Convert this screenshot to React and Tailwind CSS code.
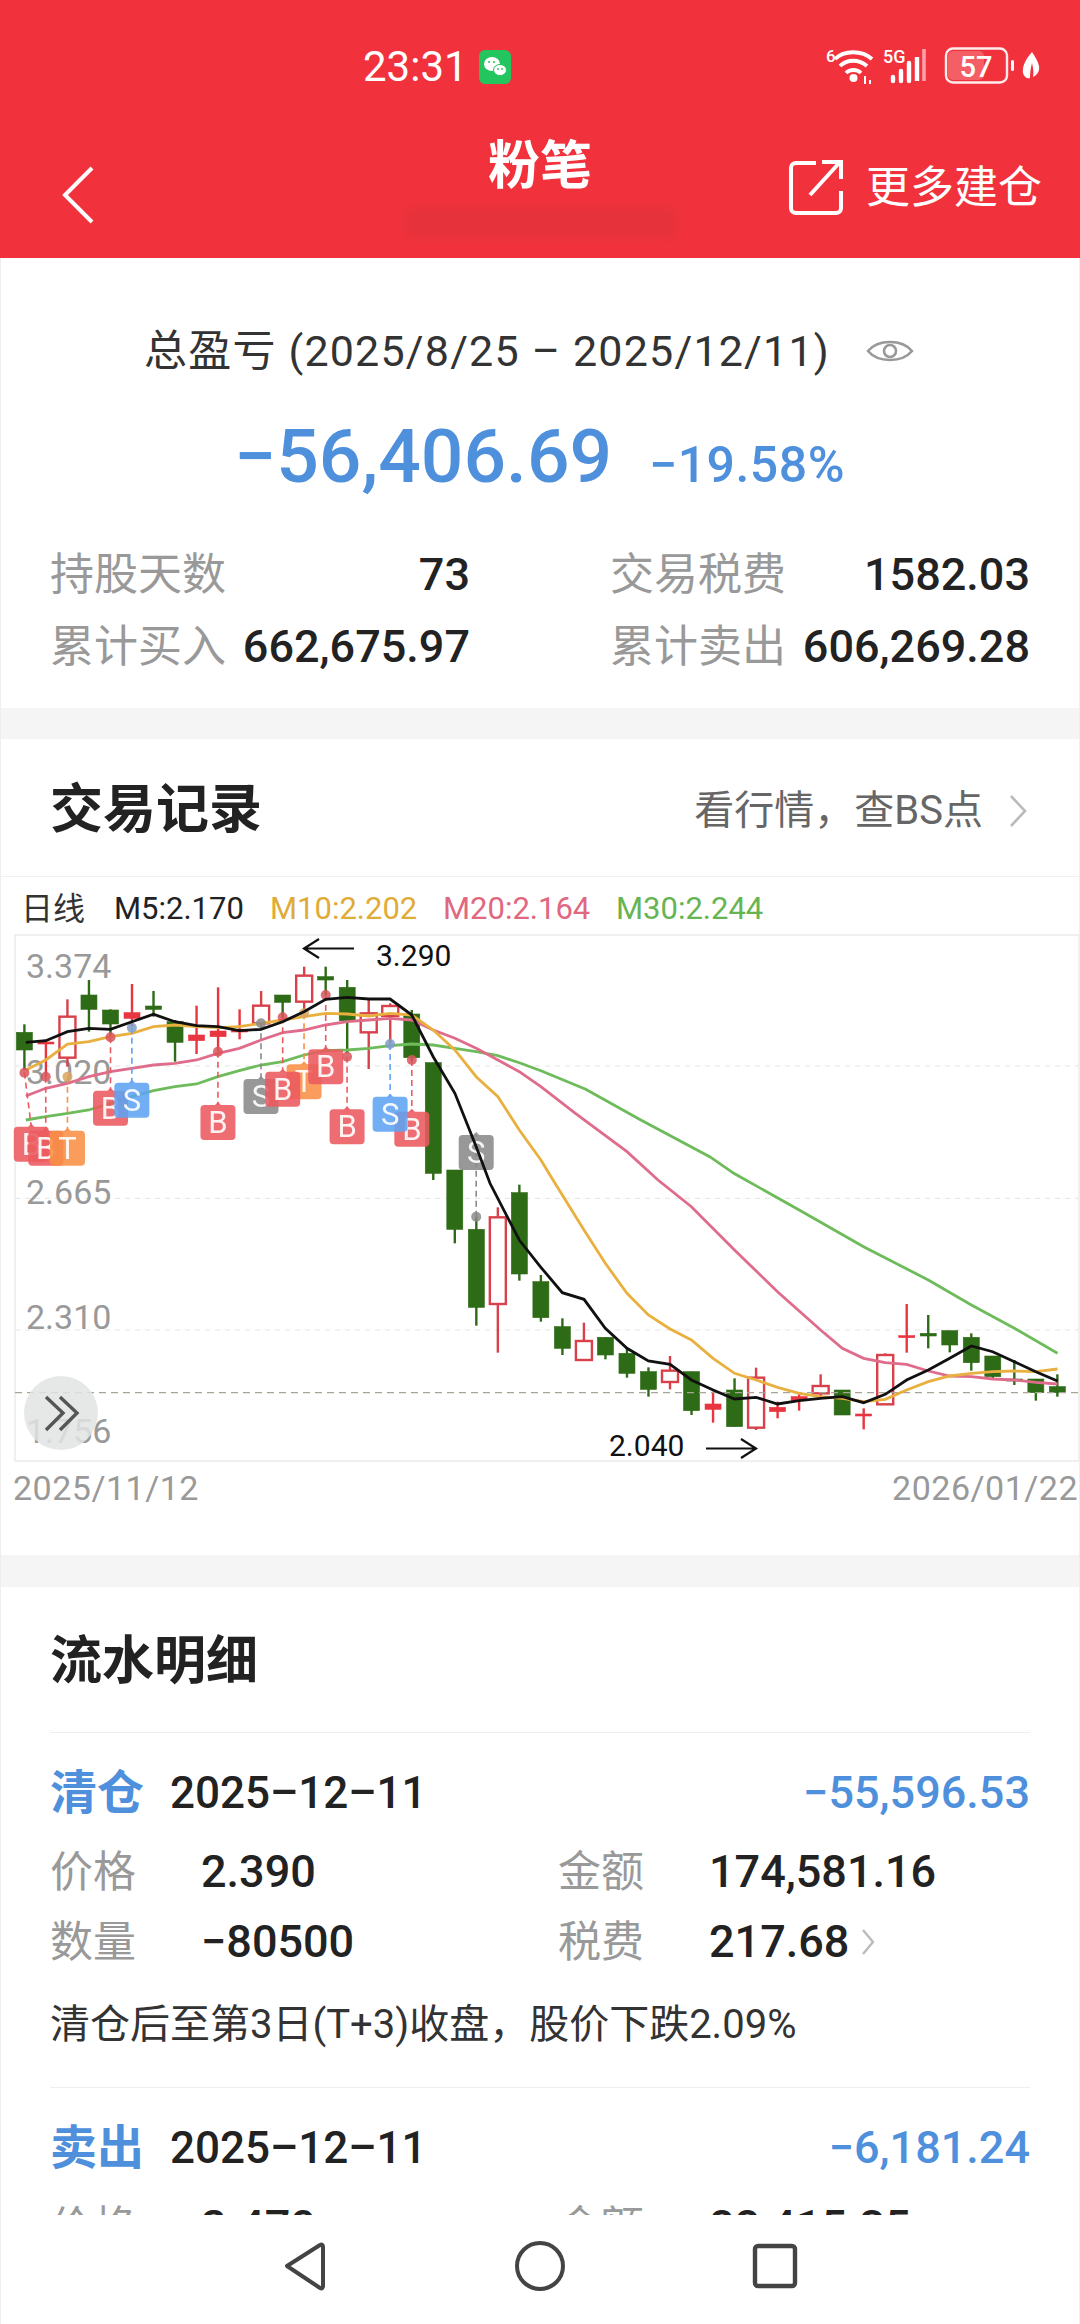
import React from 'react';

// chart points were read off crops of the chart: x/2.904, y/3 from the crop origin
const px = x => x / 2.904;
const py = y => 880 + y / 3;
const poly = pts => pts.map(([x, y]) => `${px(x).toFixed(1)},${py(y).toFixed(1)}`).join(' ');

// [kind, high, top, bottom, low]  g = solid green, h = hollow red, r = solid red
const CANDLES = [
  ['g', 433, 457, 510, 570], ['r', 480, 486, 491, 590], ['h', 358, 410, 533, 560], ['g', 300, 345, 388, 455],
  ['g', 388, 390, 432, 470], ['r', 312, 398, 415, 440], ['g', 333, 378, 388, 410], ['g', 420, 425, 487, 545],
  ['r', 377, 465, 482, 522], ['r', 322, 453, 470, 515], ['r', 388, 448, 456, 478], ['h', 333, 377, 430, 440],
  ['g', 345, 345, 367, 420], ['h', 260, 287, 365, 400], ['g', 260, 290, 300, 345], ['g', 300, 322, 422, 520],
  ['h', 360, 400, 457, 567], ['h', 370, 378, 408, 490], ['g', 390, 402, 533, 545], ['g', 548, 548, 880, 900],
  ['g', 870, 870, 1048, 1090], ['g', 1010, 1048, 1282, 1337], ['h', 982, 1012, 1272, 1418], ['g', 914, 938, 1182, 1202],
  ['g', 1185, 1205, 1313, 1325], ['g', 1315, 1340, 1405, 1425], ['h', 1328, 1383, 1440, 1440], ['g', 1372, 1372, 1425, 1438],
  ['g', 1405, 1420, 1480, 1493], ['g', 1462, 1475, 1528, 1550], ['h', 1428, 1472, 1506, 1528], ['g', 1475, 1475, 1592, 1605],
  ['r', 1535, 1572, 1588, 1628], ['g', 1495, 1530, 1640, 1640], ['h', 1463, 1493, 1643, 1650], ['r', 1565, 1582, 1595, 1615],
  ['r', 1540, 1550, 1562, 1592], ['h', 1483, 1518, 1540, 1550], ['g', 1530, 1530, 1605, 1605], ['r', 1585, 1602, 1608, 1648],
  ['h', 1420, 1425, 1573, 1575], ['r', 1272, 1367, 1373, 1418], ['g', 1305, 1360, 1368, 1405], ['g', 1352, 1352, 1395, 1417],
  ['g', 1360, 1372, 1448, 1472], ['g', 1428, 1428, 1490, 1495], ['g', 1440, 1497, 1502, 1515], ['g', 1497, 1497, 1538, 1562],
  ['g', 1483, 1520, 1538, 1550],
];

const M30 = [[72, 720], [130, 710], [193, 700], [255, 690], [318, 670], [380, 650], [443, 632], [505, 620], [568, 612], [630, 590], [692, 572], [755, 555], [818, 545], [880, 525], [943, 512], [1005, 510], [1068, 505], [1130, 497], [1193, 492], [1255, 495], [1318, 505], [1380, 515], [1443, 527], [1505, 548], [1568, 572], [1698, 628], [1858, 720], [2058, 830], [2128, 880], [2318, 990], [2505, 1100], [2693, 1200], [2818, 1275], [2943, 1345], [3068, 1420]];
const M20 = [[72, 648], [130, 625], [193, 610], [255, 590], [318, 575], [380, 565], [443, 555], [505, 550], [568, 540], [630, 520], [692, 505], [755, 480], [818, 458], [880, 450], [943, 435], [1005, 425], [1068, 420], [1130, 415], [1193, 420], [1255, 450], [1318, 475], [1380, 505], [1443, 540], [1505, 575], [1568, 620], [1668, 700], [1818, 815], [1908, 900], [2005, 980], [2130, 1110], [2255, 1235], [2380, 1350], [2443, 1405], [2505, 1435], [2568, 1448], [2630, 1453], [2693, 1473], [2755, 1488], [2818, 1490], [2880, 1497], [2943, 1500], [3005, 1507], [3068, 1512]];
const M10 = [[72, 570], [130, 540], [193, 492], [255, 485], [318, 470], [380, 460], [443, 440], [505, 435], [568, 440], [630, 443], [692, 440], [755, 430], [818, 420], [880, 410], [943, 400], [1005, 402], [1068, 408], [1130, 400], [1193, 405], [1255, 450], [1318, 510], [1380, 590], [1443, 650], [1505, 750], [1568, 840], [1603, 900], [1693, 1050], [1755, 1150], [1818, 1240], [1880, 1305], [1943, 1347], [2005, 1380], [2068, 1435], [2130, 1480], [2193, 1500], [2255, 1522], [2318, 1540], [2380, 1550], [2443, 1555], [2505, 1565], [2568, 1558], [2630, 1530], [2693, 1505], [2755, 1488], [2818, 1480], [2880, 1475], [2943, 1473], [3005, 1475], [3068, 1467]];
const M5 = [[72, 487], [130, 482], [193, 455], [255, 445], [318, 448], [380, 425], [443, 403], [505, 425], [568, 437], [630, 440], [692, 452], [755, 448], [818, 425], [880, 395], [943, 358], [1005, 352], [1068, 357], [1130, 357], [1193, 405], [1255, 530], [1318, 640], [1380, 800], [1420, 910], [1470, 1010], [1505, 1080], [1568, 1162], [1630, 1238], [1693, 1258], [1755, 1345], [1818, 1405], [1880, 1443], [1943, 1453], [2005, 1500], [2068, 1530], [2130, 1557], [2193, 1552], [2255, 1572], [2318, 1562], [2380, 1555], [2443, 1550], [2505, 1568], [2568, 1543], [2630, 1500], [2693, 1470], [2755, 1435], [2818, 1398], [2880, 1415], [2943, 1445], [3005, 1475], [3068, 1503]];

const MARK_COLORS = {
  B: { fill: '#ec5a5f', dot: '#d9555c' },
  S: { fill: '#5ea3f2', dot: '#7f9ec9' },
  G: { fill: '#8a8a8a', dot: '#8a8a8a' },
  T: { fill: '#fa8f45', dot: '#d9a45f' },
};

// [style, letter, x of the pin, top of the box, dot x, dot y]
const MARKERS = [
  ['B', 'B', 88, 740, 68, 578], ['B', 'B', 130, 752, 130, 590], ['T', 'T', 193, 752, 193, 590],
  ['B', 'B', 318, 632, 318, 472], ['S', 'S', 380, 608, 380, 443], ['B', 'B', 630, 675, 630, 515],
  ['G', 'S', 755, 597, 755, 430], ['T', 'T', 880, 553, 880, 400], ['B', 'B', 818, 575, 818, 412],
  ['B', 'B', 943, 508, 943, 345], ['B', 'B', 1005, 688, 1005, 530], ['B', 'B', 1193, 695, 1193, 540],
  ['S', 'S', 1130, 650, 1130, 492], ['G', 'S', 1380, 765, 1380, 1010],
];

const AXIS = [['3.374', 258], ['3.020', 575], ['2.665', 936], ['2.310', 1310], ['1.756', 1652]];

const Candle = ({ data, index }) => {
  const [kind, high, top, bottom, low] = data;
  const x = 23.4 + index * 21.52;
  const color = kind === 'g' ? '#2e6b16' : kind === 'h' ? '#d8404a' : '#e8353f';
  return (
    <g>
      <line x1={x} x2={x} y1={py(high)} y2={py(low)} stroke={color} strokeWidth="2.4" />
      <rect
        x={x - 8}
        y={py(top)}
        width="16"
        height={Math.max(py(bottom) - py(top), 2)}
        fill={kind === 'h' ? '#fff' : color}
        stroke={color}
        strokeWidth={kind === 'h' ? 2.4 : 0.6}
      />
    </g>
  );
};

const Marker = ({ data }) => {
  const [style, letter, x, top, dotX, dotY] = data;
  const c = MARK_COLORS[style];
  const cx = px(x);
  const y = py(top);
  return (
    <g>
      <line x1={px(dotX)} x2={cx} y1={py(dotY)} y2={y} stroke={c.fill} strokeWidth="1.6" strokeDasharray="6 4" />
      <circle cx={px(dotX)} cy={py(dotY)} r="5" fill={c.dot} opacity="0.85" />
      <g opacity="0.88">
        <path d={`M${cx - 4} ${y + 1} L${cx} ${y - 3} L${cx + 4} ${y + 1}Z`} fill={c.fill} />
        <rect x={cx - 17.5} y={y} width="35" height="35" rx="4" fill={c.fill} />
      </g>
      <text x={cx} y={y + 28} textAnchor="middle" fontSize="31" fill="#fff" opacity="0.92">{letter}</text>
    </g>
  );
};

const KChart = () => (
  <svg viewBox="0 935 1080 526" className="block w-[1080px] h-[526px] overflow-visible">
    <rect x="14" y="935" width="1064" height="526" fill="#fff" stroke="#e6e6e6" strokeWidth="1.2" />
    {[558, 955, 1350].map(y => (
      <line key={y} x1="14" x2="1078" y1={py(y)} y2={py(y)} stroke="#e4e4e4" strokeWidth="1" strokeDasharray="5 5" />
    ))}
    {AXIS.map(([label, y]) => (
      <text key={label} x="25" y={py(y) + 12} fontSize="34" fill="#999999">{label}</text>
    ))}
    {CANDLES.map((c, i) => <Candle key={i} data={c} index={i} />)}
    <line x1="14" x2="1078" y1={py(1538)} y2={py(1538)} stroke="#a8a498" strokeWidth="1.4" strokeDasharray="7 5" />
    <polyline points={poly(M30)} fill="none" stroke="#6dbb5a" strokeWidth="2.8" />
    <polyline points={poly(M20)} fill="none" stroke="#e06c8c" strokeWidth="2.8" />
    <polyline points={poly(M10)} fill="none" stroke="#e9b03f" strokeWidth="2.8" />
    {MARKERS.map((m, i) => <Marker key={i} data={m} />)}
    <polyline points={poly(M5)} fill="none" stroke="#111111" strokeWidth="2.8" />
    {/* high and low callouts */}
    <path d="M353 948.5H303M318 939L303 948.5L318 958" fill="none" stroke="#111" strokeWidth="2.2" />
    <text x="375" y="966" fontSize="30" fill="#111">3.290</text>
    <text x="608" y="1456" fontSize="30" fill="#111">2.040</text>
    <path d="M705 1448.5H755M740 1439L755 1448.5L740 1458" fill="none" stroke="#111" strokeWidth="2.2" />
    {/* expand button */}
    <circle cx="60" cy="1413" r="37" fill="#e2e3e3" opacity="0.85" />
    <path d="M45 1397L62 1413L45 1430M59 1397L76 1413L59 1430" fill="none" stroke="#555" strokeWidth="3.4" />
  </svg>
);

const StatusIcons = () => (
  <svg viewBox="0 0 215 40" className="w-[215px] h-[40px] text-white" fill="none">
    <text x="0" y="15" fontSize="17" fill="#fff" fontWeight="500">6</text>
    <path d="M9 12C18 3 36 3 46 12M14 19C21 12 33 12 41 19M20 26C24 22 31 22 35 26" stroke="#fff" strokeWidth="3.8" />
    <circle cx="27.5" cy="31" r="4" fill="#fff" />
    <path d="M39 29v8M44 33v4" stroke="#fff" strokeWidth="2" />
    <text x="57" y="16" fontSize="18" fill="#fff" fontWeight="500">5G</text>
    <path d="M67 30v4M75 24v10M83 16v18" stroke="#fff" strokeWidth="4.4" strokeLinecap="round" />
    <path d="M91 10v24" stroke="#fff" strokeWidth="4.4" />
    <path d="M98 2v32" stroke="#f9a0a6" strokeWidth="3.6" />
    <rect x="120" y="1.5" width="61" height="34" rx="7" stroke="#fff" strokeWidth="2.4" opacity="0.9" />
    <rect x="122" y="4" width="36" height="29" rx="5" fill="#ffffff" opacity="0.22" />
    <text x="150" y="30" fontSize="29" fill="#fff" textAnchor="middle" fontWeight="500">57</text>
    <rect x="185" y="13" width="3" height="11" rx="1.5" fill="#fff" />
    <path d="M206 5C199 13 196 20 197 26C198 30 201 32 204 31C204 25 205 20 206 16C207 21 208 25 207 30C211 28 214 24 213 19C212 14 209 10 206 5Z" fill="#fff" />
  </svg>
);

const WeChat = () => (
  <svg viewBox="0 0 32 34" className="w-[32px] h-[34px]">
    <rect width="32" height="34" rx="6" fill="#22c55e" />
    <ellipse cx="13" cy="14" rx="8" ry="7" fill="#fff" />
    <ellipse cx="21" cy="20" rx="6.5" ry="5.6" fill="#fff" stroke="#22c55e" strokeWidth="1" />
    <circle cx="10" cy="12" r="1" fill="#22c55e" />
    <circle cx="15" cy="12" r="1" fill="#22c55e" />
    <circle cx="19" cy="19" r="0.9" fill="#22c55e" />
    <circle cx="23" cy="19" r="0.9" fill="#22c55e" />
  </svg>
);

const Stat = ({ label, value }) => (
  <div className="flex items-center justify-between w-[420px]">
    <span className="text-[44px] text-[#999999]">{label}</span>
    <span className="text-[45px] font-medium text-[#222222]">{value}</span>
  </div>
);

const Field = ({ label, value, children }) => (
  <div className="flex items-center w-[508px] shrink-0">
    <span className="w-[151px] text-[43px] text-[#999999]">{label}</span>
    <span className="text-[45px] font-medium text-[#222222]">{value}</span>
    {children}
  </div>
);

const Trade = ({ kind, date, profit, price, amount, qty, tax, note }) => (
  <div className="border-b border-[#eeeeee] pb-[37px]">
    <div className="flex items-center justify-between h-[60px]">
      <div className="flex items-center">
        <span className="w-[120px] text-[47px] font-bold text-[#4f90dc]">{kind}</span>
        <span className="text-[44px] font-medium text-[#222222]">{date}</span>
      </div>
      <span className="text-[45px] font-medium text-[#4f90dc]">{profit}</span>
    </div>
    <div className="flex items-center h-[70px] mt-[14px]">
      <Field label="价格" value={price} />
      <Field label="金额" value={amount} />
    </div>
    <div className="flex items-center h-[70px]">
      <Field label="数量" value={qty} />
      <Field label="税费" value={tax}>
        <svg viewBox="0 0 14 28" className="w-[14px] h-[28px] ml-[12px]" fill="none">
          <path d="M2 2L12 14L2 26" stroke="#bbbbbb" strokeWidth="2.4" />
        </svg>
      </Field>
    </div>
    {note && <div className="text-[40px] leading-[50px] mt-[23px] text-[#333333]">{note}</div>}
  </div>
);

export default function App() {
  return (
    <div className="w-[1080px] h-[2324px] flex flex-col overflow-hidden bg-white font-['Roboto','Noto_Sans_CJK_SC',sans-serif]">
      <div className="h-[258px] shrink-0 bg-[#f1323c] text-white">
        <div className="flex items-center h-[34px] pt-[50px] box-content pl-[363px] pr-[39px]">
          <span className="text-[42px] leading-none w-[116px]">23:31</span>
          <WeChat />
          <span className="ml-auto"><StatusIcons /></span>
        </div>
        <div className="grid grid-cols-[426px_auto_1fr] mt-[58px] pl-[62px] pr-[38px]">
          <svg viewBox="0 0 32 58" className="w-[32px] h-[58px] mt-[24px]" fill="none">
            <path d="M30 2L3 29L30 56" stroke="#fff" strokeWidth="4" />
          </svg>
          <div className="relative w-[104px] text-[52px] leading-[50px] font-bold">
            粉笔
            <div className="absolute left-[-82px] top-[66px] w-[270px] h-[30px] bg-[#c9323a] opacity-30 blur-[6px]" />
          </div>
          <div className="flex items-center justify-end mt-[17px] h-[58px]">
            <svg viewBox="0 0 56 58" className="w-[56px] h-[58px] mr-[22px]" fill="none">
              <path d="M28 4H8C5 4 3 6 3 9V49C3 52 5 54 8 54H48C51 54 53 52 53 49V32" stroke="#fff" strokeWidth="4" />
              <path d="M22 36L52 3M34 3H53V20" stroke="#fff" strokeWidth="4" />
            </svg>
            <span className="text-[44px] leading-none">更多建仓</span>
          </div>
        </div>
      </div>

      <div className="flex-1 overflow-hidden bg-[#f5f5f5] border-x border-[#eeeeee]">
        <section className="h-[450px] bg-white pl-[49px] pr-[49px] pt-[70px]">
          <div className="flex items-center h-[46px] pl-[94px] text-[43px] tracking-[1.2px] text-[#333333]">
            总盈亏 (2025/8/25 – 2025/12/11)
            <svg viewBox="0 0 48 30" className="w-[48px] h-[30px] ml-[36px]" fill="none">
              <path d="M2 15C12 3 36 3 46 15C36 27 12 27 2 15Z" stroke="#999999" strokeWidth="2.6" />
              <circle cx="24" cy="15" r="6" stroke="#999999" strokeWidth="2.6" />
            </svg>
          </div>
          <div className="flex items-baseline h-[90px] mt-[37px] pl-[184px] text-[#4f90dc]">
            <span className="text-[75px] leading-[90px] font-medium w-[415px]">−56,406.69</span>
            <span className="text-[50px] leading-[90px] font-medium tracking-[0.5px]">−19.58%</span>
          </div>
          <div className="flex justify-between h-[72px] mt-[38px]">
            <Stat label="持股天数" value="73" />
            <Stat label="交易税费" value="1582.03" />
          </div>
          <div className="flex justify-between h-[72px]">
            <Stat label="累计买入" value="662,675.97" />
            <Stat label="累计卖出" value="606,269.28" />
          </div>
        </section>

        <section className="h-[816px] mt-[31px] bg-white">
          <div className="flex items-center justify-between h-[138px] pt-[6px] pl-[49px] pr-[52px] border-b border-[#f0f0f0]">
            <span className="text-[53px] font-bold text-[#222222]">交易记录</span>
            <div className="flex items-center text-[40px] text-[#666666]">
              看行情，查BS点
              <svg viewBox="0 0 18 34" className="w-[18px] h-[34px] ml-[26px]" fill="none">
                <path d="M2 2L16 17L2 32" stroke="#bbbbbb" strokeWidth="2.6" />
              </svg>
            </div>
          </div>
          <div className="flex items-center h-[58px] pt-[6px] pl-[20px] text-[31px]">
            <span className="w-[93px] text-[32px] text-[#333333]">日线</span>
            <span className="w-[156px] text-[#222222]">M5:2.170</span>
            <span className="w-[173px] text-[#e0ac38]">M10:2.202</span>
            <span className="w-[173px] text-[#e0687f]">M20:2.164</span>
            <span className="text-[#66b552]">M30:2.244</span>
          </div>
          <KChart />
          <div className="flex justify-between pl-[12px] pr-[1px] text-[34px] tracking-[0.5px] leading-[54px] text-[#999999]">
            <span>2025/11/12</span>
            <span>2026/01/22</span>
          </div>
        </section>

        <section className="mt-[32px] bg-white pl-[49px] pr-[49px]">
          <div className="flex items-center h-[146px] pt-[4px] border-b border-[#eeeeee] text-[52px] font-bold text-[#222222]">流水明细</div>
          <div className="pt-[30px]">
            <Trade kind="清仓" date="2025–12–11" profit="−55,596.53" price="2.390" amount="174,581.16" qty="−80500" tax="217.68" note="清仓后至第3日(T+3)收盘，股价下跌2.09%" />
          </div>
          <div className="pt-[30px]">
            <Trade kind="卖出" date="2025–12–11" profit="−6,181.24" price="2.470" amount="88,415.35" qty="−35800" tax="110.52" />
          </div>
        </section>
      </div>

      <nav className="h-[109px] shrink-0 bg-white flex justify-center gap-[175px] pt-[24px] border-x border-[#eeeeee]">
        <svg viewBox="0 0 60 54" className="w-[60px] h-[54px]" fill="none">
          <path d="M45 6L12 27L45 49C47 50 48 49 48 47V8C48 6 47 5 45 6Z" stroke="#444444" strokeWidth="4" strokeLinejoin="round" />
        </svg>
        <svg viewBox="0 0 60 54" className="w-[60px] h-[54px]" fill="none">
          <circle cx="30" cy="27" r="23" stroke="#444444" strokeWidth="4" />
        </svg>
        <svg viewBox="0 0 60 54" className="w-[60px] h-[54px]" fill="none">
          <rect x="10" y="7" width="40" height="40" rx="3" stroke="#444444" strokeWidth="4.4" />
        </svg>
      </nav>
    </div>
  );
}
